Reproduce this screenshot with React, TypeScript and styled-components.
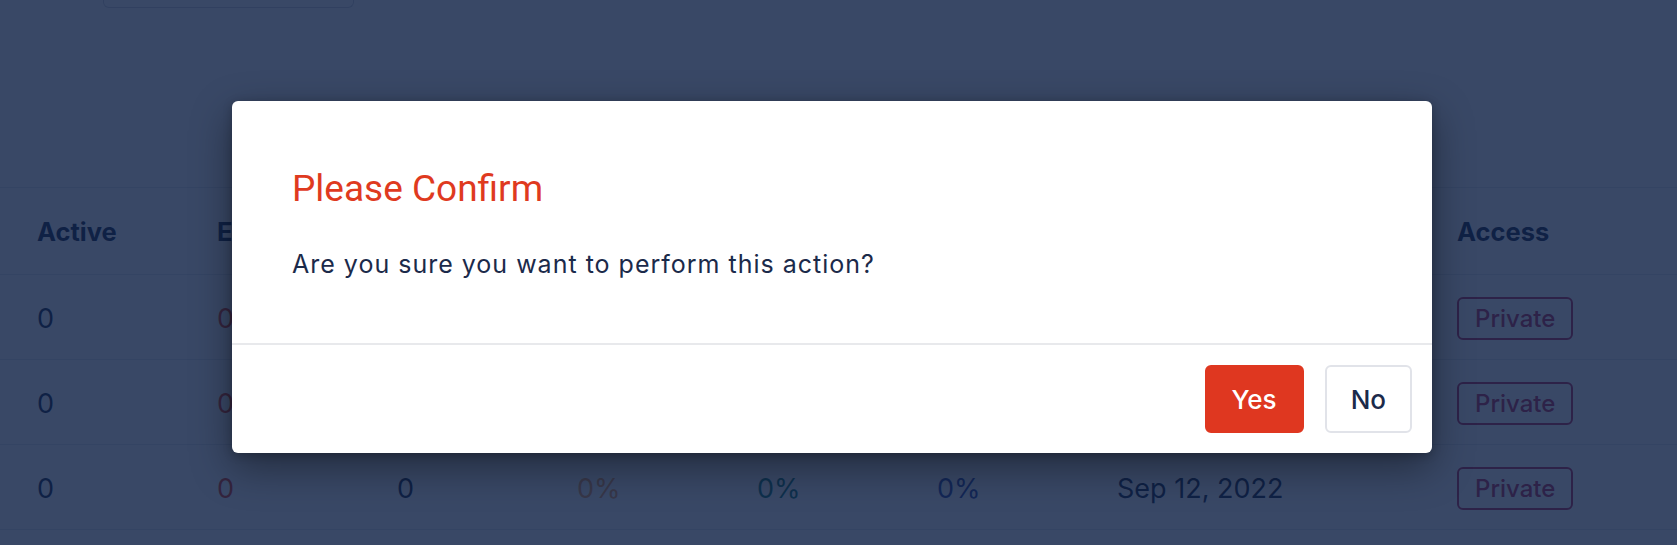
import React from "react";
import styled, { createGlobalStyle } from "styled-components";

const GlobalStyle = createGlobalStyle`
  html, body { margin: 0; padding: 0; background: #ffffff; }
  body { font-family: Inter, "Liberation Sans", sans-serif; overflow: hidden; }
  * { box-sizing: border-box; }
`;

const Page = styled.div`
  position: relative;
  width: 1677px;
  height: 545px;
  overflow: hidden;
  background: #ffffff;
`;

const TopArea = styled.div`
  height: 187px;
  padding-left: 103px;
`;

const SearchStub = styled.div`
  width: 251px;
  height: 8px;
  border: 1px solid #cfd4dc;
  border-top: none;
  border-radius: 0 0 6px 6px;
  background: #ffffff;
`;

const Table = styled.div`
  border-top: 1px solid #e3e6eb;
`;

const Row = styled.div<{ $header?: boolean }>`
  display: grid;
  grid-template-columns: repeat(6, 180px) 340px 1fr;
  align-items: center;
  padding-left: 37px;
  padding-top: ${(p) => (p.$header ? 0 : 3)}px;
  height: ${(p) => (p.$header ? 87 : 85)}px;
  border-bottom: 1px solid #e3e6eb;
`;

const HeadCell = styled.div`
  font-family: Inter, "Liberation Sans", sans-serif;
  font-weight: 700;
  font-size: 25.5px;
  color: #1b2a4a;
  white-space: nowrap;
`;

type Tone = "navy" | "red" | "amber" | "teal" | "blue";
const toneColor: Record<Tone, string> = {
  navy: "#1b2a4a",
  red: "#e23b1f",
  amber: "#f0a060",
  teal: "#157a74",
  blue: "#3049a8",
};

const Cell = styled.div<{ $tone?: Tone }>`
  font-family: Inter, "Liberation Sans", sans-serif;
  font-size: 27px;
  color: ${(p) => toneColor[p.$tone ?? "navy"]};
  white-space: nowrap;
`;

const Badge = styled.span`
  display: inline-flex;
  align-items: center;
  justify-content: center;
  height: 43px;
  padding: 0 16px;
  border: 2px solid #bc2e58;
  border-radius: 6px;
  color: #bc2e58;
  font-family: Inter, "Liberation Sans", sans-serif;
  font-size: 24px;
  font-weight: 500;
`;

const Overlay = styled.div`
  position: absolute;
  inset: 0;
  background: rgba(14, 32, 68, 0.82);
  padding: 101px 0 0 232px;
`;

const Modal = styled.div`
  width: 1200px;
  background: #ffffff;
  border-radius: 6px;
  box-shadow: 0 14px 40px rgba(0, 0, 0, 0.4), 0 2px 10px rgba(0, 0, 0, 0.22);
  overflow: hidden;
`;

const ModalBody = styled.div`
  padding: 68px 60px 63px;
`;

const Title = styled.h2`
  margin: 0;
  font-family: Roboto, "Liberation Sans", sans-serif;
  font-weight: 400;
  font-size: 37px;
  line-height: 40px;
  color: #df3a1f;
`;

const Message = styled.p`
  margin: 39px 0 0;
  font-family: Inter, "Liberation Sans", sans-serif;
  font-size: 25px;
  line-height: 32px;
  letter-spacing: 1px;
  color: #1b2a4a;
`;

const Footer = styled.div`
  display: flex;
  justify-content: flex-end;
  gap: 21px;
  padding: 20px;
  border-top: 2px solid #e8e9ec;
`;

const Button = styled.button<{ $primary?: boolean }>`
  height: 68px;
  padding: 0 ${(p) => (p.$primary ? 25 : 24)}px;
  border-radius: 6px;
  border: 2px solid ${(p) => (p.$primary ? "#df3720" : "#e1e3e9")};
  background: ${(p) => (p.$primary ? "#df3720" : "#ffffff")};
  color: ${(p) => (p.$primary ? "#ffffff" : "#1b2a4a")};
  font-family: Inter, "Liberation Sans", sans-serif;
  font-size: 26px;
  font-weight: 500;
  cursor: pointer;
`;

const headers = ["Active", "Expired", "Used", "Open Rate", "Click Rate", "Bounce Rate", "Created", "Access"];

type RowData = { cells: { v: string; tone?: Tone }[] };
const rows: RowData[] = Array.from({ length: 3 }, () => ({
  cells: [
    { v: "0" },
    { v: "0", tone: "red" },
    { v: "0" },
    { v: "0%", tone: "amber" },
    { v: "0%", tone: "teal" },
    { v: "0%", tone: "blue" },
    { v: "Sep 12, 2022" },
  ],
}));

export default function App() {
  return (
    <>
      <GlobalStyle />
      <Page>
        <TopArea>
          <SearchStub />
        </TopArea>
        <Table>
          <Row $header>
            {headers.map((h) => (
              <HeadCell key={h}>{h}</HeadCell>
            ))}
          </Row>
          {rows.map((r, i) => (
            <Row key={i}>
              {r.cells.map((c, j) => (
                <Cell key={j} $tone={c.tone}>
                  {c.v}
                </Cell>
              ))}
              <div>
                <Badge>Private</Badge>
              </div>
            </Row>
          ))}
        </Table>
        <Overlay>
          <Modal role="dialog" aria-modal="true">
            <ModalBody>
              <Title>Please Confirm</Title>
              <Message>Are you sure you want to perform this action?</Message>
            </ModalBody>
            <Footer>
              <Button $primary>Yes</Button>
              <Button>No</Button>
            </Footer>
          </Modal>
        </Overlay>
      </Page>
    </>
  );
}
